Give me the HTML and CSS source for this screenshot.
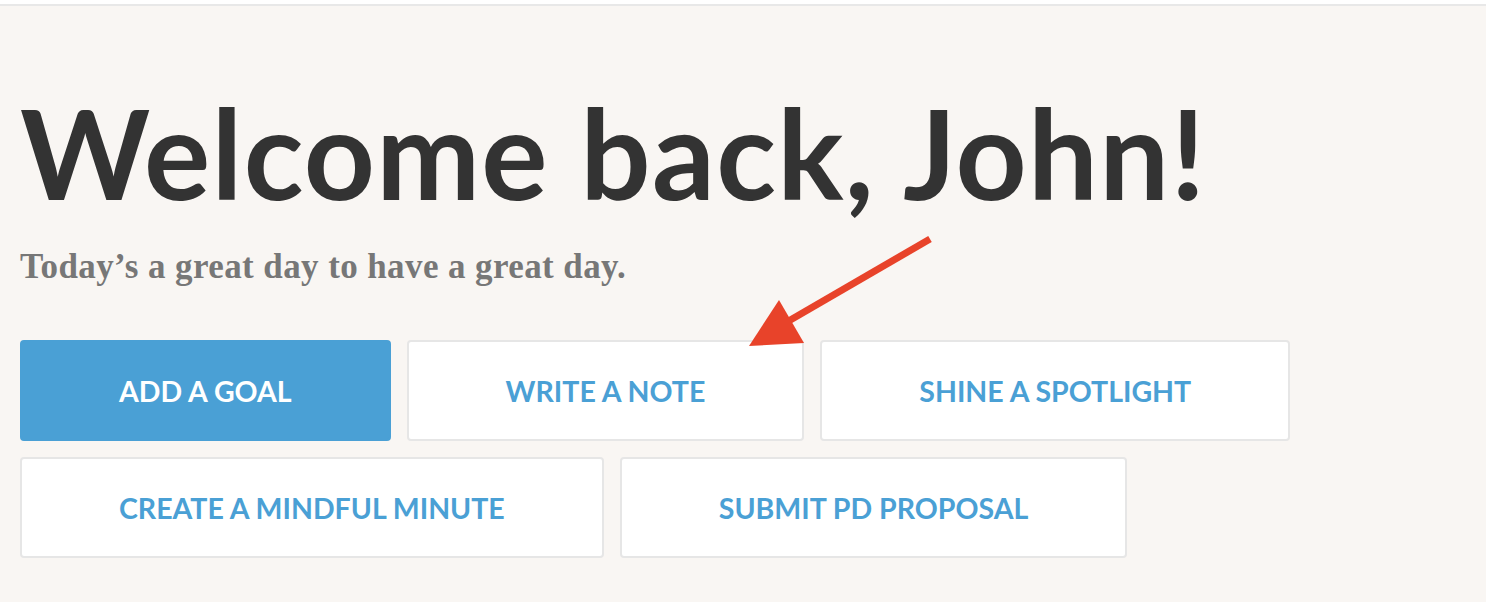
FILE: index.html
```html
<!DOCTYPE html>
<html>
<head>
  <meta charset="utf-8">
  <title>Dashboard</title>
  <link rel="stylesheet" href="styles.css">
</head>
<body>
  <div class="topbar"></div>
  <div class="welcome">
    <h1>Welcome back, John!</h1>
    <p class="tagline">Today’s a great day to have a great day.</p>
    <div class="actions">
      <div class="row">
        <button class="btn primary">ADD A GOAL</button>
        <button class="btn">WRITE A NOTE</button>
        <button class="btn">SHINE A SPOTLIGHT</button>
      </div>
      <div class="row">
        <button class="btn">CREATE A MINDFUL MINUTE</button>
        <button class="btn">SUBMIT PD PROPOSAL</button>
      </div>
    </div>
    <svg class="pointer" width="200" height="130" viewBox="0 0 200 130">
      <line x1="190" y1="13" x2="40" y2="100" stroke="#e8432a" stroke-width="7"/>
      <polygon points="39,74 9,120 64,117" fill="#e8432a"/>
    </svg>
  </div>
</body>
</html>
```

FILE: styles.css
```css
body {
  margin: 0;
  background-color: #f9f6f3;
  font-family: "Lato", sans-serif;
}

.topbar {
  height: 4px;
  background-color: #fff;
  border-bottom: 2px solid #e8e8e8;
}

.welcome {
  position: relative;
  padding: 0 20px;
}

h1 {
  margin: 0;
  padding-top: 71px;
  font-size: 124px;
  line-height: 150px;
  font-weight: 700;
  letter-spacing: 1.3px;
  color: #333;
}

.tagline {
  margin: 0;
  padding-top: 20px;
  font-family: "Liberation Serif", serif;
  font-weight: bold;
  font-size: 35px;
  letter-spacing: 0.4px;
  color: #777;
  line-height: 40px;
}

.actions {
  margin-top: 53px;
  display: flex;
  flex-direction: column;
  gap: 16px;
}

.row {
  display: flex;
  gap: 16px;
}

.btn {
  height: 101px;
  padding: 0 97px;
  background-color: #fff;
  border: 2px solid #e6e6e6;
  border-radius: 4px;
  font-family: "Lato", sans-serif;
  font-weight: 700;
  font-size: 28.5px;
  color: #4aa0d5;
}

.btn.primary {
  background-color: #4aa0d5;
  border-color: #4aa0d5;
  color: #fff;
}

.pointer {
  position: absolute;
  left: 740px;
  top: 220px;
}
```
